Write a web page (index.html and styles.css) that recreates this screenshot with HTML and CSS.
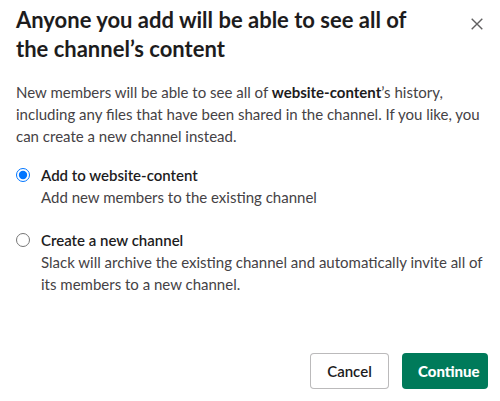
FILE: index.html
```html
<!DOCTYPE html>
<html>
<head>
<meta charset="utf-8">
<link rel="stylesheet" href="styles.css">
</head>
<body>
<div class="modal">
  <div class="header">
    <h1 class="title">Anyone you add will be able to see all of the channel’s content</h1>
    <button class="close" aria-label="Close">
      <svg width="12" height="12" viewBox="0 0 12 12"><path d="M0.7 0.7 L11.3 11.3 M11.3 0.7 L0.7 11.3" stroke="#616061" stroke-width="1.4" fill="none"/></svg>
    </button>
  </div>
  <p class="intro">New members will be able to see all of <b>website-content</b>’s history, including any files that have been shared in the channel. If you like, you can create a new channel instead.</p>
  <label class="option">
    <input type="radio" name="choice" class="radio" checked>
    <span class="opt-text">
      <span class="opt-label">Add to website-content</span>
      <span class="opt-desc">Add new members to the existing channel</span>
    </span>
  </label>
  <label class="option second">
    <input type="radio" name="choice" class="radio">
    <span class="opt-text">
      <span class="opt-label">Create a new channel</span>
      <span class="opt-desc">Slack will archive the existing channel and automatically invite all of its members to a new channel.</span>
    </span>
  </label>
  <div class="footer">
    <button class="btn cancel">Cancel</button>
    <button class="btn primary">Continue</button>
  </div>
</div>
</body>
</html>
```
FILE: styles.css
```css
html, body {
  margin: 0;
  padding: 0;
  background: #ffffff;
}
.modal {
  box-sizing: border-box;
  height: 401px;
  padding: 5px 12px 12px 16px;
  display: flex;
  flex-direction: column;
  font-family: Lato, "Noto Sans", sans-serif;
  color: #1d1c1d;
}
.header {
  display: flex;
  align-items: flex-start;
  justify-content: space-between;
}
.title {
  margin: 0;
  font-size: 22px;
  line-height: 29px;
  font-weight: 700;
  max-width: 420px;
  color: #1d1c1d;
}
.close {
  border: 0;
  background: none;
  padding: 0;
  margin: 12px 3px 0 0;
  width: 16px;
  height: 14px;
  display: flex;
  align-items: center;
  justify-content: center;
}
.intro {
  margin: 18px 0 0;
  font-size: 15px;
  line-height: 22px;
  color: #454245;
}
.intro b {
  font-weight: 700;
  color: #1d1c1d;
}
.option {
  display: flex;
  align-items: flex-start;
  margin-top: 17px;
  font-size: 15px;
  line-height: 22px;
}
.option.second {
  margin-top: 21px;
}
.radio {
  margin: 4px 11px 0 0;
  width: 14px;
  height: 14px;
  flex: none;
}
.opt-text {
  display: flex;
  flex-direction: column;
}
.opt-label {
  font-weight: 600;
  color: #1d1c1d;
}
.opt-desc {
  color: #454245;
}
.footer {
  margin-top: auto;
  display: flex;
  justify-content: flex-end;
  gap: 13px;
}
.btn {
  height: 36px;
  border-radius: 4px;
  font-family: Lato, "Noto Sans", sans-serif;
  font-size: 15px;
  font-weight: 700;
  padding: 0 16px;
  box-sizing: border-box;
}
.cancel {
  width: 79px;
  background: #ffffff;
  border: 1px solid rgba(29, 28, 29, 0.3);
  color: #1d1c1d;
  font-weight: 600;
}
.primary {
  width: 86px;
  background: #007a5a;
  border: 0;
  color: #ffffff;
  font-weight: 900;
}
```
